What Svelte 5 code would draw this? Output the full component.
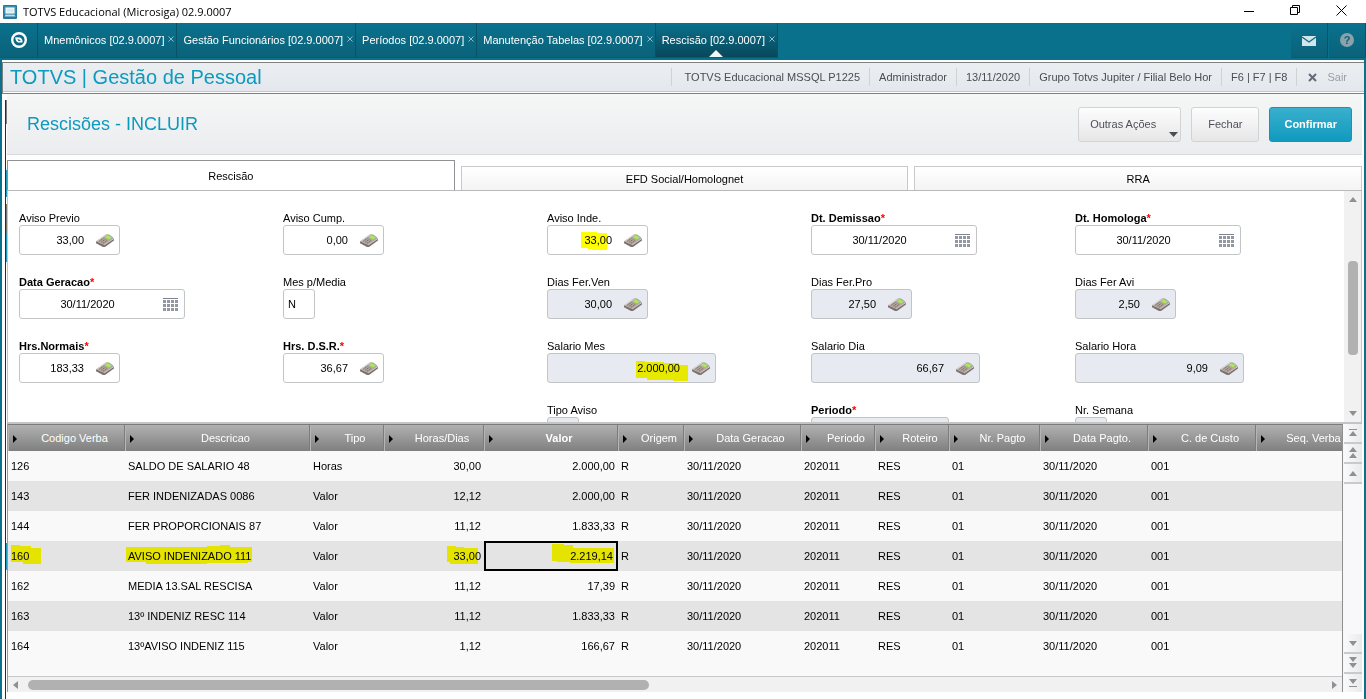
<script lang="ts">
  type Field = {
    id: string;
    label: string;
    value: string;
    kind: "calc" | "date" | "text";
    size: "xs" | "sm" | "md" | "date" | "lg";
    required?: boolean;
    readonly?: boolean;
    mark?: string;
  };

  const windows = ["Mnemônicos", "Gestão Funcionários", "Períodos", "Manutenção Tabelas", "Rescisão"];
  const folders = ["Rescisão", "EFD Social/Homolognet", "RRA"];
  const status = [
    "TOTVS Educacional MSSQL P1225",
    "Administrador",
    "13/11/2020",
    "Grupo Totvs Jupiter / Filial Belo Hor",
    "F6 | F7 | F8",
  ];

  let activeWindow = $state(4);
  let activeFolder = $state(0);

  // null keeps the grid slot empty
  const fields: (Field | null)[] = [
    { id: "avprev", label: "Aviso Previo", value: "33,00", kind: "calc", size: "sm" },
    { id: "avcump", label: "Aviso Cump.", value: "0,00", kind: "calc", size: "sm" },
    {
      id: "avinde", label: "Aviso Inde.", value: "33,00", kind: "calc", size: "sm",
      mark: "M34 7H50V8H60V25H45V24H41V23H34Z",
    },
    { id: "dtdem", label: "Dt. Demissao", value: "30/11/2020", kind: "date", size: "date", required: true },
    { id: "dthom", label: "Dt. Homologa", value: "30/11/2020", kind: "date", size: "date", required: true },
    { id: "dtger", label: "Data Geracao", value: "30/11/2020", kind: "date", size: "date", required: true },
    { id: "mesmed", label: "Mes p/Media", value: "N", kind: "text", size: "xs" },
    { id: "ferven", label: "Dias Fer.Ven", value: "30,00", kind: "calc", size: "sm", readonly: true },
    { id: "ferpro", label: "Dias Fer.Pro", value: "27,50", kind: "calc", size: "sm", readonly: true },
    { id: "feravi", label: "Dias Fer Avi", value: "2,50", kind: "calc", size: "sm", readonly: true },
    { id: "hrsnor", label: "Hrs.Normais", value: "183,33", kind: "calc", size: "sm", required: true },
    { id: "hrsdsr", label: "Hrs. D.S.R.", value: "36,67", kind: "calc", size: "sm", required: true },
    {
      id: "salmes", label: "Salario Mes", value: "2.000,00", kind: "calc", size: "lg", readonly: true,
      mark: "M89 8H98V9H117V10H132V12H141V29H126V27H100V25H89Z",
    },
    { id: "saldia", label: "Salario Dia", value: "66,67", kind: "calc", size: "lg", readonly: true },
    { id: "salhor", label: "Salario Hora", value: "9,09", kind: "calc", size: "lg", readonly: true },
    null,
    null,
    { id: "tpavi", label: "Tipo Aviso", value: "", kind: "text", size: "xs", readonly: true },
    { id: "period", label: "Periodo", value: "", kind: "text", size: "md", required: true, readonly: true },
    { id: "semana", label: "Nr. Semana", value: "", kind: "text", size: "xs", readonly: true },
  ];

  const columns = [
    { title: "Codigo Verba", width: 117 },
    { title: "Descricao", width: 185 },
    { title: "Tipo", width: 74 },
    { title: "Horas/Dias", width: 100, num: true },
    { title: "Valor", width: 134, num: true },
    { title: "Origem", width: 66 },
    { title: "Data Geracao", width: 117 },
    { title: "Periodo", width: 74 },
    { title: "Roteiro", width: 74 },
    { title: "Nr. Pagto", width: 91 },
    { title: "Data Pagto.", width: 108 },
    { title: "C. de Custo", width: 108 },
    { title: "Seq. Verba", width: 99 },
  ];

  const tail = ["R", "30/11/2020", "202011", "RES", "01", "30/11/2020", "001", ""];
  const rows = [
    ["126", "SALDO DE SALARIO 48", "Horas", "30,00", "2.000,00"],
    ["143", "FER INDENIZADAS 0086", "Valor", "12,12", "2.000,00"],
    ["144", "FER PROPORCIONAIS 87", "Valor", "11,12", "1.833,33"],
    ["160", "AVISO INDENIZADO 111", "Valor", "33,00", "2.219,14"],
    ["162", "MEDIA 13.SAL RESCISA", "Valor", "11,12", "17,39"],
    ["163", "13º INDENIZ RESC 114", "Valor", "11,12", "1.833,33"],
    ["164", "13ºAVISO INDENIZ 115", "Valor", "1,12", "166,67"],
  ].map((r) => [...r, ...tail]);

  // marker strokes over the selected row, by column
  const markedRow = 3;
  const selectedCol = 4;
  const marks: Record<number, string> = {
    0: "M3 4H12V5H23V7H33V23H15V21H3Z",
    1: "M1 6H82V5H95V4H105V6H127V21H123V22H82V23H21V21H1Z",
    3: "M63 5H72V6H80V7H94V23H66V21H63Z",
    4: "M68 3H80V4H89V7H130V22H86V21H73V20H68Z",
  };
</script>

{#snippet calculator()}
  <svg class="icon-calc" viewBox="0 0 18 13" aria-hidden="true">
    <path d="M0 7.2V9.2L7 13H9L18 6.4V4.4L8 10.6Z" fill="#7b736f" />
    <path d="M0 7.2 9.6 .6Q12 -.3 14 .9L18 4.2 8.2 11Z" fill="#b1a69d" />
    <path d="M.4 6.8 9.6 .6 11 .8 2 7Z" fill="#dcd7d2" />
    <path d="M8.6 3 11.4 1.2 16 3.6 12.8 5.8Z" fill="#b4c69c" />
    <path d="M9.4 2.9 11.8 1.4 15 3.2 14.6 4.2 12.8 5Z" fill="#a2f048" />
    <path d="M3.4 7 7.6 4.2M5.2 8.1 9.4 5.3M7 9.2 11.2 6.4" stroke="#7a6a62" stroke-width=".9" stroke-dasharray="1.4 .5" />
    <path d="M8.2 11 18 4.5" stroke="#d8d5d2" stroke-width=".7" />
  </svg>
{/snippet}

{#snippet calendar()}
  <svg class="icon-cal" viewBox="0 0 15 13" aria-hidden="true">
    <path d="M0 0H15V1H0Z" fill="#7d838f" />
    {#each [2, 6, 10] as y}
      {#each [0, 4, 8, 12] as x}
        <rect {x} {y} width="3" height="3" fill="#9297a4" />
      {/each}
    {/each}
  </svg>
{/snippet}

{#snippet mark(d: string)}
  <svg class="mark" aria-hidden="true"><path {d} fill="#ff0" /></svg>
{/snippet}

<div class="app">
  <header class="titlebar">
    <svg class="app-icon" viewBox="0 0 14 14" aria-hidden="true">
      <rect width="14" height="14" rx="1" fill="#2379a0" />
      <rect x="1" y="1" width="12" height="8" fill="#3790b2" />
      <rect x="3" y="3" width="8" height="5" fill="#d4ebf3" stroke="#fff" stroke-width="1" />
      <path d="M2.5 9.5H11.5L12.5 11.5H1.5Z" fill="#c3d8e0" />
    </svg>
    <span class="window-title">TOTVS Educacional (Microsiga) 02.9.0007</span>
    <div class="window-controls">
      <button aria-label="Minimizar"><svg viewBox="0 0 11 11"><path d="M0 6.5H10" /></svg></button>
      <button aria-label="Restaurar">
        <svg viewBox="0 0 11 11"><path d="M.5 2.5H7.5V9.5H.5ZM2.5 2.5V.5H9.5V7.5H7.5" /></svg>
      </button>
      <button aria-label="Fechar janela"><svg viewBox="0 0 11 11"><path d="M.5 .5 10.5 10.5M10.5 .5 .5 10.5" /></svg></button>
    </div>
  </header>

  <nav class="windows">
    <button class="home" aria-label="Início">
      <svg viewBox="0 0 16 16" aria-hidden="true">
        <circle cx="8" cy="8" r="6.8" fill="none" stroke="#fff" stroke-width="2.4" />
        <path d="M4.2 5.2 9 5.6Q11.6 6.6 11.6 10.4L7 10.4Q4.4 9.2 4.2 5.2Z" fill="#fff" />
        <path d="M6.4 7.2Q9.4 7 9.8 9 6.8 9.4 6.4 7.2Z" fill="#0a6a84" />
      </svg>
    </button>
    {#each windows as name, i (name)}
      <div class="window-tab" class:active={i === activeWindow}>
        <button class="window-name" onclick={() => (activeWindow = i)}>{name} [02.9.0007]</button>
        <button class="window-close" aria-label="Fechar {name}">
          <svg viewBox="0 0 6 6"><path d="M.5 .5 5.5 5.5M5.5 .5 .5 5.5" /></svg>
        </button>
      </div>
    {/each}
    <div class="nav-tools">
      <button aria-label="Mensagens">
        <svg class="mail" viewBox="0 0 14 10">
          <rect width="14" height="10" fill="#d3e4ea" />
          <path d="M0 1 7 6 14 1" fill="none" stroke="#0a6c86" stroke-width="1.3" />
        </svg>
      </button>
      <button aria-label="Ajuda"><span class="help">?</span></button>
    </div>
  </nav>

  <div class="frame">
    <div class="module">
      <h1>TOTVS | Gestão de Pessoal</h1>
      <ul class="status">
        {#each status as item}
          <li>{item}</li>
        {/each}
        <li>
          <button class="exit">
            <svg viewBox="0 0 9 9"><path d="M1 1 8 8M8 1 1 8" /></svg>
            Sair
          </button>
        </li>
      </ul>
    </div>

    <div class="workspace">
      <div class="edge"></div>
      <main>
        <section class="heading">
          <h2>Rescisões - INCLUIR</h2>
          <button class="btn more">
            Outras Ações
            <svg viewBox="0 0 9 5"><path d="M0 0H9L4.5 5Z" /></svg>
          </button>
          <button class="btn">Fechar</button>
          <button class="btn primary">Confirmar</button>
        </section>

        <div class="folders">
          {#each folders as folder, i (folder)}
            <button class:active={i === activeFolder} onclick={() => (activeFolder = i)}>{folder}</button>
          {/each}
        </div>

        <section class="form-panel">
          <form>
            {#each fields as f}
              {#if f}
                <div class="field">
                  <label for={f.id} class:required={f.required}>{f.label}{#if f.required}<i>*</i>{/if}</label>
                  <div class="box {f.size} {f.kind}" class:readonly={f.readonly}>
                    <input id={f.id} type="text" value={f.value} readonly={f.readonly} />
                    {#if f.kind === "calc"}{@render calculator()}{/if}
                    {#if f.kind === "date"}{@render calendar()}{/if}
                    {#if f.mark}{@render mark(f.mark)}{/if}
                  </div>
                </div>
              {:else}
                <div></div>
              {/if}
            {/each}
          </form>
          <div class="vbar">
            <svg viewBox="0 0 8 5"><path d="M4 0 8 5H0Z" /></svg>
            <div class="track"><div class="thumb"></div></div>
            <svg viewBox="0 0 8 5"><path d="M0 0H8L4 5Z" /></svg>
          </div>
        </section>

        <section class="grid-panel">
          <div class="grid">
            <div class="grid-scroll">
              <table>
                <colgroup>
                  {#each columns as c}
                    <col style="width: {c.width}px" />
                  {/each}
                </colgroup>
                <thead>
                  <tr>
                    {#each columns as c, i}
                      <th scope="col" class:current={i === selectedCol}>{c.title}</th>
                    {/each}
                  </tr>
                </thead>
                <tbody>
                  {#each rows as row, r}
                    <tr>
                      {#each row as cell, c}
                        <td class:num={columns[c].num} class:selected={r === markedRow && c === selectedCol}>
                          {cell}{#if r === markedRow && marks[c]}{@render mark(marks[c])}{/if}
                        </td>
                      {/each}
                    </tr>
                  {/each}
                </tbody>
              </table>
            </div>
            <div class="hbar">
              <svg viewBox="0 0 5 8"><path d="M5 0V8L0 4Z" /></svg>
              <div class="track"><div class="thumb"></div></div>
              <svg viewBox="0 0 5 8"><path d="M0 0V8L5 4Z" /></svg>
            </div>
          </div>
          <div class="pager">
            <button aria-label="Primeiro"><svg viewBox="0 0 8 12"><path d="M0 2H8V3H0ZM4 4 8 9H0Z" /></svg></button>
            <button aria-label="Página anterior"><svg viewBox="0 0 8 12"><path d="M4 0 8 5H0ZM4 6 8 11H0Z" /></svg></button>
            <button aria-label="Anterior"><svg viewBox="0 0 8 12"><path d="M4 4 8 9H0Z" /></svg></button>
            <div class="spacer"></div>
            <button aria-label="Próximo"><svg viewBox="0 0 8 12"><path d="M0 4H8L4 9Z" /></svg></button>
            <button aria-label="Próxima página"><svg viewBox="0 0 8 12"><path d="M0 0H8L4 5ZM0 6H8L4 11Z" /></svg></button>
            <button aria-label="Último"><svg viewBox="0 0 8 12"><path d="M0 2H8L4 7ZM0 9H8V10H0Z" /></svg></button>
          </div>
        </section>
      </main>
    </div>
  </div>
</div>

<style>
  :global(*) {
    box-sizing: border-box;
  }
  :global(body) {
    margin: 0;
    background: #fff;
    font-family: "Liberation Sans", Arial, sans-serif;
    font-size: 11px;
    color: #000;
  }
  button {
    font: inherit;
    color: inherit;
    border: 0;
    padding: 0;
    background: none;
  }
  h1,
  h2 {
    margin: 0;
    font-weight: normal;
    color: #0c9abe;
  }

  .app {
    display: flex;
    flex-direction: column;
    height: 100vh;
    min-height: 600px;
    overflow: hidden;
  }

  /* window chrome */
  .titlebar {
    display: flex;
    align-items: center;
    height: 23px;
    flex: none;
    padding-left: 3px;
  }
  .app-icon {
    width: 14px;
    height: 14px;
  }
  .window-title {
    margin-left: 6px;
    font-family: "Open Sans", "Noto Sans", sans-serif;
    font-size: 11px;
    line-height: 23px;
  }
  .window-controls {
    display: flex;
    margin-left: auto;
    padding-right: 2px;
  }
  .window-controls button {
    width: 46px;
    height: 20px;
  }
  .window-controls svg {
    width: 11px;
    height: 11px;
    fill: none;
    stroke: #000;
  }

  .windows {
    display: flex;
    flex: none;
    height: 37px;
    padding-bottom: 2px;
    background: #0a718d;
    color: #fff;
  }
  .home,
  .window-tab,
  .nav-tools button {
    background: linear-gradient(#0a728e, #0a6279);
    border-right: 1px solid #095268;
    border-bottom: 1px solid #095b72;
  }
  .home {
    width: 38px;
    flex: none;
    padding-top: 2px;
  }
  .home svg {
    width: 16px;
    height: 16px;
  }
  .window-tab {
    display: flex;
    align-items: center;
    position: relative;
    padding: 0 2px 0 6px;
    white-space: nowrap;
  }
  .window-tab.active {
    background: linear-gradient(#0a718c, #08485b);
  }
  .window-tab.active::after {
    content: "";
    position: absolute;
    bottom: 0;
    left: 50%;
    margin-left: -7px;
    border: 7px solid transparent;
    border-top: 0;
    border-bottom-color: #f2f5f6;
  }
  .window-close {
    width: 6px;
    height: 35px;
    margin-left: 4px;
    padding-bottom: 3px;
  }
  .window-close svg {
    width: 6px;
    height: 6px;
    display: block;
    stroke: #8fc0ce;
  }
  .nav-tools {
    display: flex;
    gap: 1px;
    margin-left: auto;
  }
  .nav-tools button {
    width: 37px;
  }
  .mail {
    width: 14px;
    height: 10px;
    vertical-align: middle;
  }
  .help {
    display: inline-block;
    width: 14px;
    border-radius: 7px;
    background: #8ba2ac;
    color: #0a6078;
    font-weight: bold;
    line-height: 14px;
  }

  .frame {
    display: flex;
    flex-direction: column;
    flex: 1;
    min-height: 0;
    padding-top: 2px;
    border: solid #0a708c;
    border-width: 0 2px;
  }
  .module {
    display: flex;
    align-items: center;
    flex: none;
    height: 32px;
    padding-left: 7px;
    border: 1px solid #808080;
    border-width: 1px 0 1px 1px;
    background: linear-gradient(#eceff1, #e3e6ec);
    box-shadow: inset 0 -1px #fff, inset 0 -2px #c4c8cc;
  }
  h1 {
    padding-bottom: 3px;
    font-size: 20px;
    line-height: 24px;
  }
  .status {
    display: flex;
    margin: 0 8px 0 auto;
    padding: 0 0 2px;
    list-style: none;
    color: #4a4d52;
    line-height: 18px;
    white-space: nowrap;
  }
  .status li {
    padding: 0 9px;
    border-left: 1px solid #cfd4d3;
  }
  .status li:first-child {
    padding-left: 13px;
  }
  .exit {
    display: flex;
    align-items: center;
    gap: 10px;
    padding-left: 2px;
    line-height: 18px;
    color: #9a9fa8;
  }
  .exit svg {
    width: 9px;
    height: 9px;
    stroke: #646a78;
    stroke-width: 2;
  }

  .workspace {
    display: flex;
    flex: 1;
    min-height: 0;
    padding: 0 2px 0 3px;
  }
  /* sliver of the desktop behind the form */
  .edge {
    flex: none;
    width: 2px;
    margin-top: 6px;
    border-left: 1px solid #0b3554;
    background: linear-gradient(
      #808080 24px, #fff 24px 70px, #1c9cc0 70px 97px, #fff 97px 104px,
      #777 104px 133px, #1c9cc0 133px 162px, #fff 162px 443px, #1c9cc0 443px 470px, #fff 470px
    );
  }
  main {
    display: flex;
    flex-direction: column;
    flex: 1;
    min-width: 0;
    padding-bottom: 7px;
  }

  .heading {
    display: flex;
    align-items: center;
    gap: 10px;
    flex: none;
    height: 61px;
    padding: 0 10px 0 20px;
    border-bottom: 1px solid #d8d9db;
    background: linear-gradient(#f5f7f6, #ebecef);
  }
  h2 {
    margin-right: auto;
    font-size: 18px;
  }
  .btn {
    height: 35px;
    padding: 0 16px;
    border: 1px solid #d2d3d5;
    border-radius: 3px;
    background: linear-gradient(#fdfdfd, #e7e7e8);
    color: #4d5058;
    font-size: 11px;
  }
  .btn.more {
    display: flex;
    align-items: center;
    gap: 13px;
    padding: 0 2px 0 11px;
  }
  .more svg {
    width: 9px;
    height: 5px;
    align-self: flex-end;
    margin-bottom: 4px;
    fill: #474d59;
  }
  .btn.primary {
    padding: 0 14px;
    border-color: #1296b8;
    background: linear-gradient(#3aafce, #109abe);
    color: #fff;
    font-weight: bold;
  }

  .folders {
    display: flex;
    align-items: flex-end;
    gap: 6px;
    flex: none;
    height: 36px;
    border-bottom: 1px solid #b8b9bb;
  }
  .folders button {
    flex: 1;
    height: 24px;
    border: 1px solid #c9c9c9;
    border-bottom: 0;
    background: linear-gradient(#fff, #f4f4f4);
  }
  .folders button.active {
    height: 30px;
    border-color: #909194;
    background: #fff;
  }

  .form-panel {
    display: flex;
    flex: none;
    height: 232px;
    overflow: hidden;
    border: 1px solid #c4c4c4;
    border-top: 0;
  }
  form {
    flex: 1;
    display: grid;
    grid-template-columns: repeat(5, 1fr);
    align-content: start;
    row-gap: 21px;
    padding: 21px 5px 0 11px;
  }
  label {
    display: block;
    line-height: 13px;
  }
  label.required {
    font-weight: bold;
  }
  label i {
    color: #f00;
    font-style: normal;
  }
  .box {
    position: relative;
    display: flex;
    align-items: center;
    height: 30px;
    border: 1px solid #c2c4c6;
    border-radius: 3px;
    background: #fff;
  }
  .box.readonly {
    background: #e7eaf1;
  }
  .xs {
    width: 32px;
  }
  .sm {
    width: 101px;
  }
  .md {
    width: 138px;
  }
  .box.date {
    width: 166px;
    gap: 8px;
    padding-right: 6px;
  }
  .lg {
    width: 169px;
  }
  .calc {
    gap: 12px;
    padding-right: 5px;
  }
  .text {
    padding-left: 4px;
  }
  input {
    flex: 1;
    min-width: 0;
    height: 28px;
    padding: 0;
    border: 0;
    outline: 0;
    background: none;
    font: inherit;
  }
  .calc input {
    text-align: right;
  }
  .box.date input {
    text-align: center;
  }
  .icon-calc {
    flex: none;
    width: 18px;
    height: 13px;
  }
  .icon-cal {
    flex: none;
    width: 15px;
    height: 13px;
  }
  .mark {
    position: absolute;
    inset: 0;
    width: 100%;
    height: 100%;
    mix-blend-mode: multiply;
    pointer-events: none;
  }
  .box .mark {
    inset: -1px;
  }

  .vbar {
    display: flex;
    flex-direction: column;
    align-items: center;
    flex: none;
    width: 17px;
    padding: 6px 0;
    background: #f1f1f1;
  }
  .vbar svg {
    width: 8px;
    height: 5px;
  }
  .vbar svg,
  .hbar svg,
  .pager svg {
    flex: none;
    fill: #8f9092;
  }
  .vbar .track {
    flex: 1;
    padding-top: 59px;
  }
  .vbar .thumb {
    width: 10px;
    height: 94px;
    border-radius: 4px;
    background: #b1b1b1;
  }

  .grid-panel {
    display: flex;
    flex: 1;
    min-height: 0;
    border-left: 1px solid #9a9a9a;
    border-top: 1px solid #c4c4c4;
  }
  .grid {
    display: flex;
    flex-direction: column;
    flex: 1;
    min-width: 0;
    border-right: 1px solid #8d8f92;
    background: #f9f9f9;
  }
  .grid-scroll {
    flex: 1;
    overflow: hidden;
  }
  table {
    width: 1347px;
    table-layout: fixed;
    border-collapse: separate;
    border-spacing: 0;
  }
  th {
    position: relative;
    height: 27px;
    padding: 0 0 0 17px;
    border: solid #7c7c7c;
    border-width: 1px 1px 0 0;
    box-shadow: inset 1px 0 #b5b5b5;
    background: linear-gradient(#b1b1b1, #7f7f7f);
    color: #fff;
    font-weight: normal;
    white-space: nowrap;
  }
  th.current {
    font-weight: bold;
  }
  th::before {
    content: "";
    position: absolute;
    left: 5px;
    top: 10px;
    border: 4px solid transparent;
    border-left-color: #000;
    border-right: 0;
  }
  td {
    position: relative;
    height: 30px;
    padding: 0 3px;
    white-space: nowrap;
  }
  tbody tr:nth-child(even) {
    background: #e4e4e4;
  }
  td.num {
    text-align: right;
  }
  td.selected {
    padding-right: 5px;
    outline: 2px solid #000;
    outline-offset: -2px;
  }

  .hbar {
    display: flex;
    align-items: center;
    flex: none;
    height: 16px;
    padding: 0 5px;
    border-top: 1px solid #c8c8c8;
    background: #f1f1f1;
  }
  .hbar svg {
    width: 5px;
    height: 8px;
  }
  .hbar .track {
    flex: 1;
    padding: 0 10px;
  }
  .hbar .thumb {
    width: 48%;
    height: 10px;
    border-radius: 5px;
    background: #b1b1b1;
  }

  .pager {
    display: flex;
    flex-direction: column;
    flex: none;
    width: 19px;
    padding-left: 1px;
    background: #f8f8fb;
  }
  .pager button {
    height: 20px;
    border-bottom: 2px solid #c9cacc;
    background: linear-gradient(90deg, #fafafb, #e9eaec);
  }
  .pager button:last-child {
    height: 18px;
    border-bottom: 0;
  }
  .pager svg {
    display: block;
    width: 8px;
    height: 12px;
    margin: 0 auto;
  }
  .pager .spacer {
    flex: 1;
  }
</style>
